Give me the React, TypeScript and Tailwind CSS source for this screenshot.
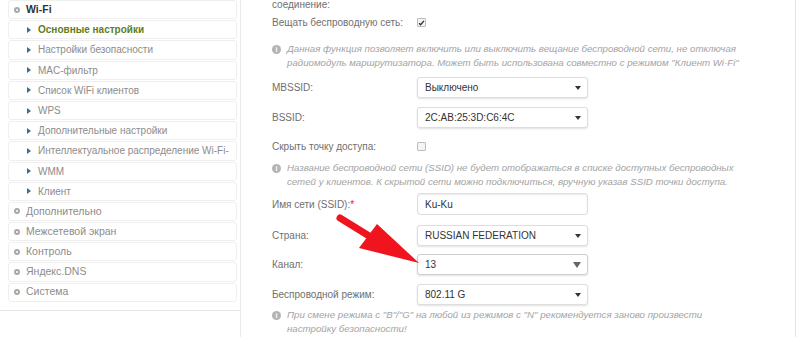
import React from 'react'

type NavItem = { label: string; sub?: boolean; active?: boolean; open?: boolean }

const nav: NavItem[] = [
  { label: 'Wi-Fi', open: true },
  { label: 'Основные настройки', sub: true, active: true },
  { label: 'Настройки безопасности', sub: true },
  { label: 'MAC-фильтр', sub: true },
  { label: 'Список WiFi клиентов', sub: true },
  { label: 'WPS', sub: true },
  { label: 'Дополнительные настройки', sub: true },
  { label: 'Интеллектуальное распределение Wi-Fi-', sub: true },
  { label: 'WMM', sub: true },
  { label: 'Клиент', sub: true },
  { label: 'Дополнительно' },
  { label: 'Межсетевой экран' },
  { label: 'Контроль' },
  { label: 'Яндекс.DNS' },
  { label: 'Система' },
]

function Sidebar() {
  return (
    <div className="w-[241px] shrink-0 border-r border-[#ececec] h-full">
      <div className="border-b border-[#e6e6e6] pl-2 pr-[3px] pb-[8px] flex flex-col gap-[1px]">
        {nav.map(item => (
          <div
            key={item.label}
            className="h-[19.2px] flex items-center border border-[#efefef] rounded-[3px] bg-white whitespace-nowrap"
          >
            {item.sub ? (
              <>
                <span className="ml-[18px] w-0 h-0 border-y-[3px] border-y-transparent border-l-[4px] border-l-[#3d6e8f]" />
                <span className={`ml-[7px] text-[10px] ${item.active ? 'text-[#5f7d22] font-bold' : 'text-[#8c8c8c]'}`}>
                  {item.label}
                </span>
              </>
            ) : (
              <>
                <span className="ml-[5px] w-[6px] h-[6px] rounded-full bg-[#a8a8a8] flex items-center justify-center">
                  <span className="w-[2px] h-[2px] rounded-full bg-white" />
                </span>
                <span className={`ml-[6px] text-[10.5px] ${item.open ? 'text-[#333] font-bold' : 'text-[#8c8c8c]'}`}>
                  {item.label}
                </span>
              </>
            )}
          </div>
        ))}
      </div>
    </div>
  )
}

function Select({ value, big }: { value: string; big?: boolean }) {
  return (
    <div
      className={`w-[171px] h-[21px] rounded-[3px] border bg-white flex items-center justify-between pl-[7px] pr-[6px] shadow-[0_1px_2px_rgba(0,0,0,0.12)] ${big ? 'border-[#cfcfcf]' : 'border-[#dedede]'}`}
    >
      <span className="text-[10px] text-[#333]">{value}</span>
      {big ? (
        <span className="w-0 h-0 border-x-[4px] border-x-transparent border-t-[6px] border-t-[#666]" />
      ) : (
        <span className="w-0 h-0 border-x-[3px] border-x-transparent border-t-[4px] border-t-[#333]" />
      )}
    </div>
  )
}

function Checkbox({ checked }: { checked?: boolean }) {
  return (
    <span className="w-[9px] h-[9px] border border-[#bdbdbd] rounded-[1px] bg-[#f4f4f4] flex items-center justify-center">
      {checked && (
        <svg width="8" height="8" viewBox="0 0 8 8">
          <path d="M1.2 4.2 L3 6 L6.8 1.6" stroke="#333" strokeWidth="1.6" fill="none" />
        </svg>
      )}
    </span>
  )
}

function Info({ lines }: { lines: string[] }) {
  return (
    <div className="flex items-start">
      <span className="mt-[3px] w-[9px] h-[9px] rounded-full bg-[#b4b4b4] text-white text-[7px] font-bold leading-[9px] text-center">
        i
      </span>
      <div className="ml-[6px] text-[9.7px] leading-[14px] italic text-[#a3a3a3]">
        {lines.map(l => (
          <div key={l} className="whitespace-nowrap">{l}</div>
        ))}
      </div>
    </div>
  )
}

function Row({ label, children, star }: { label: string; children: React.ReactNode; star?: boolean }) {
  return (
    <div className="flex items-center">
      <div className="w-[145px] text-[10px] text-[#6f6f6f] whitespace-nowrap">
        {label}
        {star && <span className="text-[#e02020]">*</span>}
      </div>
      {children}
    </div>
  )
}

function Arrow() {
  return (
    <svg className="absolute left-[330px] top-[208px]" width="95" height="62" viewBox="0 0 95 62">
      <line x1="10" y1="10" x2="44" y2="31" stroke="#f0141e" strokeWidth="7" strokeLinecap="round" />
      <polygon points="47,16 29,40 89,55" fill="#f0141e" />
    </svg>
  )
}

export default function App() {
  return (
    <div
      className="relative w-[800px] h-[337px] overflow-hidden bg-white flex"
      style={{ fontFamily: '"Liberation Sans", Arial, sans-serif' }}
    >
      <Sidebar />
      <div className="w-[555px] border-r border-[#e3e3e3] shadow-[1px_0_3px_rgba(0,0,0,0.06)] pl-[31px] flex flex-col">
        <div className="h-[10px] flex items-end text-[10px] leading-[11px] text-[#6f6f6f]">соединение:</div>
        <div className="mt-[5px] h-[20px]">
          <Row label="Вещать беспроводную сеть:">
            <Checkbox checked />
          </Row>
        </div>
        <div className="mt-[7px]">
          <Info
            lines={[
              'Данная функция позволяет включить или выключить вещание беспроводной сети, не отключая',
              'радиомодуль маршрутизатора. Может быть использована совместно с режимом "Клиент Wi-Fi"',
            ]}
          />
        </div>
        <div className="mt-[7px]">
          <Row label="MBSSID:">
            <Select value="Выключено" />
          </Row>
        </div>
        <div className="mt-[9px]">
          <Row label="BSSID:">
            <Select value="2C:AB:25:3D:C6:4C" />
          </Row>
        </div>
        <div className="mt-[8px] h-[20px] flex items-center">
          <Row label="Скрыть точку доступа:">
            <Checkbox />
          </Row>
        </div>
        <div className="mt-[5px]">
          <Info
            lines={[
              'Название беспроводной сети (SSID) не будет отображаться в списке доступных беспроводных',
              'сетей у клиентов. К скрытой сети можно подключиться, вручную указав SSID точки доступа.',
            ]}
          />
        </div>
        <div className="mt-[4px]">
          <Row label="Имя сети (SSID):" star>
            <div className="w-[171px] h-[22px] rounded-[3px] border border-[#dedede] bg-white flex items-center pl-[7px] shadow-[inset_0_1px_2px_rgba(0,0,0,0.08)]">
              <span className="text-[10px] text-[#333]">Ku-Ku</span>
            </div>
          </Row>
        </div>
        <div className="mt-[10px]">
          <Row label="Страна:">
            <Select value="RUSSIAN FEDERATION" />
          </Row>
        </div>
        <div className="mt-[8px]">
          <Row label="Канал:">
            <Select value="13" big />
          </Row>
        </div>
        <div className="mt-[9px]">
          <Row label="Беспроводной режим:">
            <Select value="802.11 G" />
          </Row>
        </div>
        <div className="mt-[3px]">
          <Info
            lines={[
              'При смене режима с "B"/"G" на любой из режимов с "N" рекомендуется заново произвести',
              'настройку безопасности!',
            ]}
          />
        </div>
      </div>
      <div className="flex-1 bg-white" />
      <Arrow />
    </div>
  )
}
